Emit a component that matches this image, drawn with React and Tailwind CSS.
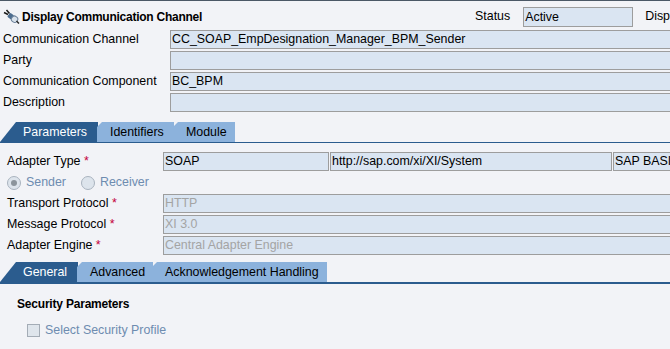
import React from 'react'

const HEADER_FIELDS = [
  { label: 'Communication Channel', value: 'CC_SOAP_EmpDesignation_Manager_BPM_Sender' },
  { label: 'Party', value: '' },
  { label: 'Communication Component', value: 'BC_BPM' },
  { label: 'Description', value: '' },
]

const PROTOCOL_FIELDS = [
  { label: 'Transport Protocol', value: 'HTTP' },
  { label: 'Message Protocol', value: 'XI 3.0' },
  { label: 'Adapter Engine', value: 'Central Adapter Engine' },
]

// little plug icon next to the title
function PlugIcon() {
  return (
    <svg width="17" height="15" viewBox="0 0 17 15">
      <path d="M1 3.5 L5 5.5 M3.5 1 L6.5 4.5" stroke="#1a1a1a" strokeWidth="1.5" />
      <g transform="rotate(38 10 9)">
        <rect x="4.5" y="6.5" width="5" height="5" rx="1" fill="#4e6e90" />
        <rect x="9" y="6" width="6" height="6" rx="2.5" fill="#d9e2ec" stroke="#6c819a" strokeWidth="1" />
      </g>
      <path d="M13.5 12 L16 14.5" stroke="#2a2a2a" strokeWidth="1.5" />
    </svg>
  )
}

function Req() {
  return <span className="text-[#c4003c]"> *</span>
}

function Tab({ label, active, first, w }) {
  return (
    <div
      className={
        'h-[20px] flex items-center shrink-0 whitespace-nowrap ' +
        (active
          ? 'bg-[#2b5c8e] text-white [clip-path:polygon(16px_0,100%_0,100%_100%,0_100%)] '
          : 'bg-[#8cb2dc] text-black -ml-[1px] [clip-path:polygon(5px_0,100%_0,100%_100%,0_100%,0_5px)] ') +
        (first ? 'pl-[23px] pr-[9px]' : 'pl-[13px] pr-[9px]')
      }
      style={{ width: w }}
    >
      {label}
    </div>
  )
}

export default function App() {
  return (
    <div className="w-[670px] h-[349px] overflow-hidden bg-[#f2f3f7] border-t border-[#4b5866] text-[12.4px] text-black font-['Liberation_Sans',Arial,sans-serif]">
      {/* ── Title row ───────────────────────────────────── */}
      <div className="h-[28px] pt-[3px] flex items-center">
        <div className="pl-[3px] pr-[2px]"><PlugIcon /></div>
        <span className="font-bold text-[12px] tracking-[-0.25px]">Display Communication Channel</span>
        <span className="ml-auto mr-[13px]">Status</span>
        <div className="w-[110px] h-[20px] border border-[#9d9d9d] bg-[#dae5f2] pl-[1px] leading-[18px] whitespace-nowrap">Active</div>
        <span className="ml-[12px] whitespace-nowrap">Disp</span>
      </div>

      {/* ── Header fields ───────────────────────────────── */}
      <div className="pt-[1px] flex flex-col gap-[2px]">
        {HEADER_FIELDS.map((f) => (
          <div key={f.label} className="h-[19px] flex items-center">
            <span className="w-[170px] pl-[3px] shrink-0 whitespace-nowrap">{f.label}</span>
            <div className="w-[520px] h-[19px] shrink-0 border border-[#9d9d9d] bg-[#dae5f2] pl-[1px] leading-[17px] whitespace-nowrap">
              {f.value}
            </div>
          </div>
        ))}
      </div>

      {/* ── Tabs: Parameters / Identifiers / Module ─────── */}
      <div className="mt-[10px] flex border-b border-[#2b5c8e]">
        <Tab label="Parameters" active first w={98} />
        <Tab label="Identifiers" w={77} />
        <Tab label="Module" w={62} />
      </div>

      <div className="pt-[9px] flex flex-col gap-[2px]">
        <div className="h-[19px] flex items-center">
          <span className="w-[163px] pl-[7px] shrink-0">Adapter Type<Req /></span>
          <div className="w-[166px] h-[19px] shrink-0 border border-[#9d9d9d] bg-[#dae5f2] pl-[1px] leading-[17px]">SOAP</div>
          <div className="ml-[1px] w-[282px] h-[19px] shrink-0 border border-[#9d9d9d] bg-[#dae5f2] pl-[1px] leading-[17px]">http://sap.com/xi/XI/System</div>
          <div className="ml-[1px] w-[100px] h-[19px] shrink-0 border border-[#9d9d9d] bg-[#dae5f2] pl-[1px] leading-[17px] whitespace-nowrap">SAP BASIS</div>
        </div>

        <div className="h-[19px] flex items-center pl-[7px] text-[#6e8cb0]">
          <span className="w-[14px] h-[14px] rounded-full border border-[#a9b3bf] bg-[#dde4ec] flex items-center justify-center">
            <span className="w-[6px] h-[6px] rounded-full bg-[#8c949c]" />
          </span>
          <span className="ml-[5px]">Sender</span>
          <span className="ml-[15px] w-[14px] h-[14px] rounded-full border border-[#a9b3bf] bg-[#dde4ec]" />
          <span className="ml-[5px]">Receiver</span>
        </div>

        {PROTOCOL_FIELDS.map((f) => (
          <div key={f.label} className="h-[19px] flex items-center">
            <span className="w-[163px] pl-[7px] shrink-0 whitespace-nowrap">{f.label}<Req /></span>
            <div className="w-[520px] h-[19px] shrink-0 border border-[#9d9d9d] bg-[#dae5f2] pl-[1px] leading-[17px] text-[#a4a4a4] whitespace-nowrap">
              {f.value}
            </div>
          </div>
        ))}
      </div>

      {/* ── Tabs: General / Advanced / Acknowledgement ──── */}
      <div className="mt-[7px] flex border-b-2 border-[#2b5c8e]">
        <Tab label="General" active first w={78} />
        <Tab label="Advanced" w={76} />
        <Tab label="Acknowledgement Handling" w={175} />
      </div>

      <div className="pl-[17px] pt-[11px] font-bold text-[12px] tracking-[-0.2px]">Security Parameters</div>
      <div className="mt-[8px] pl-[27px] flex items-center text-[#6e8cb0]">
        <span className="w-[13px] h-[13px] border border-[#a4acb6] bg-[#dfe5ec]" />
        <span className="ml-[5px]">Select Security Profile</span>
      </div>
    </div>
  )
}
